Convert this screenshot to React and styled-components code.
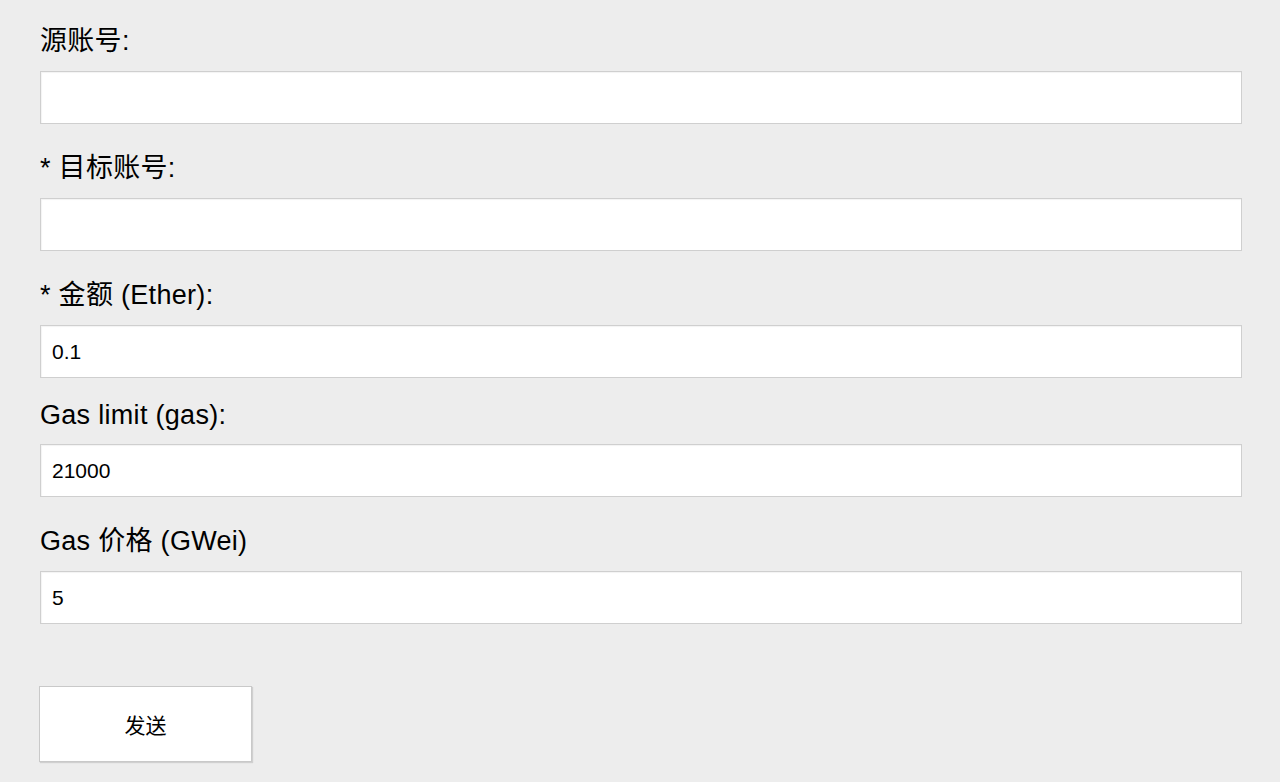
import React from "react";
import styled, { createGlobalStyle } from "styled-components";

const Global = createGlobalStyle`
  html, body {
    margin: 0;
    padding: 0;
    background: #ededed;
  }
  body {
    font-family: "Liberation Sans", "Noto Sans CJK SC", sans-serif;
    color: #000;
  }
`;

const Form = styled.form`
  display: flex;
  flex-direction: column;
  padding: 19px 38px 20px 40px;
  background: #ededed;
  min-height: 782px;
  box-sizing: border-box;
`;

const Field = styled.div`
  display: flex;
  flex-direction: column;
  margin-top: ${(p) => (p.$first ? "0" : "22px")};
`;

const Label = styled.label`
  display: block;
  font-size: 27px;
  letter-spacing: 0.3px;
  line-height: normal;
  color: #000;
  margin-bottom: 13px;
`;

const Input = styled.input`
  display: block;
  width: 100%;
  box-sizing: border-box;
  height: 53px;
  padding: 0 11px;
  margin: 0;
  border: 1px solid #cfcfcf;
  box-shadow: inset 1px 1px 1px rgba(0, 0, 0, 0.05);
  background: #fff;
  font-family: "Liberation Sans", "Noto Sans CJK SC", sans-serif;
  font-size: 21px;
  color: #000;
  outline: none;
  border-radius: 0;
`;

const Button = styled.button`
  align-self: flex-start;
  margin-top: 62px;
  margin-left: -1px;
  width: 213px;
  height: 76px;
  box-sizing: border-box;
  background: #fff;
  border: 1px solid #c9c9c9;
  box-shadow: 1px 1px 1px rgba(0, 0, 0, 0.12);
  border-radius: 0;
  font-family: "Liberation Sans", "Noto Sans CJK SC", sans-serif;
  font-size: 21px;
  color: #000;
  cursor: pointer;
`;

const fields = [
  { id: "from", label: "源账号:", value: "" },
  { id: "to", label: "* 目标账号:", value: "" },
  { id: "amount", label: "* 金额 (Ether):", value: "0.1" },
  { id: "gas", label: "Gas limit (gas):", value: "21000" },
  { id: "price", label: "Gas 价格 (GWei)", value: "5" },
];

export default function App() {
  return (
    <>
      <Global />
      <Form onSubmit={(e) => e.preventDefault()}>
        {fields.map((f, i) => (
          <Field key={f.id} $first={i === 0}>
            <Label htmlFor={f.id}>{f.label}</Label>
            <Input id={f.id} type="text" defaultValue={f.value} />
          </Field>
        ))}
        <Button type="submit">发送</Button>
      </Form>
    </>
  );
}
